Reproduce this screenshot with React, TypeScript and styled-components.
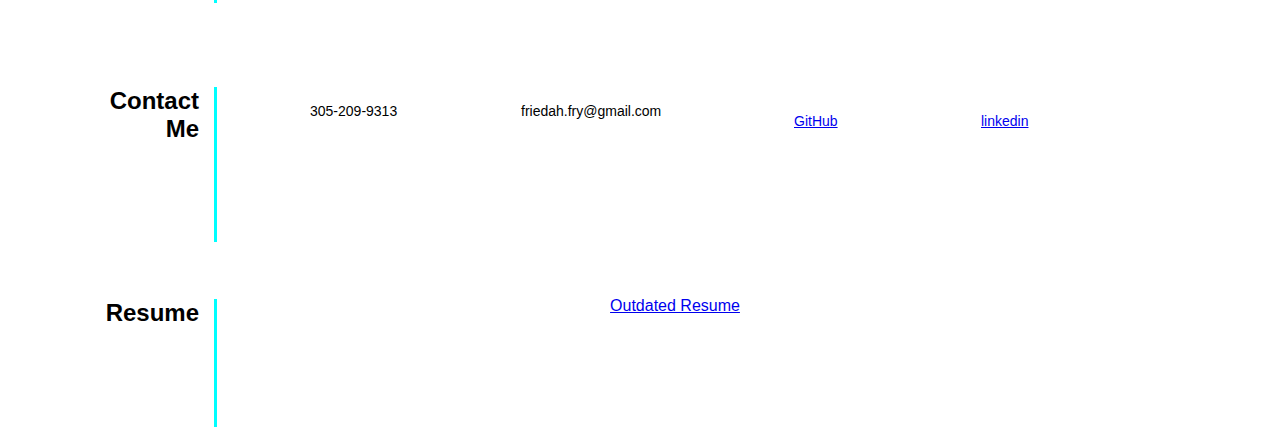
import React from "react";
import styled, { createGlobalStyle } from "styled-components";

const Global = createGlobalStyle`
  html, body { margin: 0; padding: 0; background: #fff; }
  body { font-family: "Liberation Sans", Arial, sans-serif; color: #000; }
`;

const Page = styled.main`
  display: flex;
  flex-direction: column;
  width: 1264px;
  height: 444px;
  overflow: hidden;
`;

const Section = styled.section<{ $height: number; $gapAfter: number }>`
  display: flex;
  align-items: stretch;
  height: ${(p) => p.$height}px;
  margin-bottom: ${(p) => p.$gapAfter}px;
  flex-shrink: 0;
`;

const Label = styled.h2`
  width: 100px;
  margin: 0 15px 0 99px;
  font-size: 24px;
  font-weight: 700;
  line-height: normal;
  text-align: right;
`;

const LabelSpacer = styled.div`
  width: 200px;
  margin-right: 14px;
`;

const Body = styled.div`
  flex: 1;
  border-left: 3px solid #00ffff;
`;

const ContactRow = styled.ul`
  list-style: none;
  margin: 0;
  padding: 16px 0 0 93px;
  display: grid;
  grid-template-columns: 211px 273px 187px auto;
  align-items: start;
  font-size: 14px;
  line-height: normal;
`;

const Item = styled.li<{ $drop?: number }>`
  margin-top: ${(p) => p.$drop ?? 0}px;
  white-space: nowrap;
`;

const Link = styled.a<{ $size?: number }>`
  color: #0000ee;
  text-decoration: underline;
  font-size: ${(p) => p.$size ?? 14}px;
`;

const ResumeBody = styled(Body)`
  display: flex;
  justify-content: center;
  align-items: flex-start;
  padding-right: 131px;
`;

const ResumeLink = styled(Link)`
  margin-top: -2px;
  line-height: normal;
`;

export default function App() {
  return (
    <>
      <Global />
      <Page>
        <Section $height={3} $gapAfter={84}>
          <LabelSpacer />
          <Body />
        </Section>
        <Section $height={155} $gapAfter={57}>
          <Label>Contact Me</Label>
          <Body>
            <ContactRow>
              <Item>305-209-9313</Item>
              <Item>friedah.fry@gmail.com</Item>
              <Item $drop={10}>
                <Link href="#">GitHub</Link>
              </Item>
              <Item $drop={10}>
                <Link href="#">linkedin</Link>
              </Item>
            </ContactRow>
          </Body>
        </Section>
        <Section $height={128} $gapAfter={0}>
          <Label>Resume</Label>
          <ResumeBody>
            <ResumeLink href="#" $size={16}>
              Outdated Resume
            </ResumeLink>
          </ResumeBody>
        </Section>
      </Page>
    </>
  );
}
